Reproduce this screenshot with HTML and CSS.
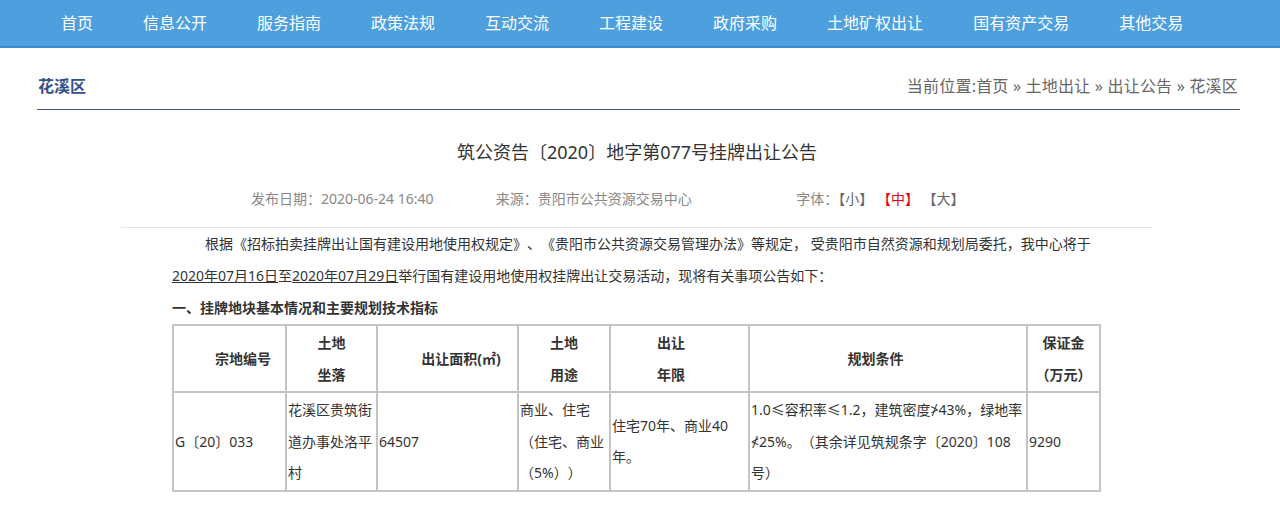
FILE: index.html
```html
<!DOCTYPE html>
<html lang="zh-CN">
<head>
    <meta charset="UTF-8">
    <title>筑公资告〔2020〕地字第077号挂牌出让公告</title>
    <link rel="stylesheet" href="styles.css">
</head>
<body>
    <div class="nav">
        <div class="wrap">
            <ul class="menu">
                <li><a href="#">首页</a></li>
                <li><a href="#">信息公开</a></li>
                <li><a href="#">服务指南</a></li>
                <li><a href="#">政策法规</a></li>
                <li><a href="#">互动交流</a></li>
                <li><a href="#">工程建设</a></li>
                <li><a href="#">政府采购</a></li>
                <li><a href="#">土地矿权出让</a></li>
                <li><a href="#">国有资产交易</a></li>
                <li><a href="#">其他交易</a></li>
            </ul>
        </div>
    </div>

    <div class="wrap crumbbar">
        <span class="area">花溪区</span>
        <span class="position">当前位置:<a href="#">首页</a> » <a href="#">土地出让</a> » <a href="#">出让公告</a> » <a href="#">花溪区</a></span>
    </div>

    <div class="wrap">
        <div class="article">
            <h1 class="title">筑公资告〔2020〕地字第077号挂牌出让公告</h1>
            <div class="meta">
                <span class="date">发布日期：2020-06-24 16:40</span>
                <span class="source">来源：贵阳市公共资源交易中心</span>
                <span class="fontsize">字体：<a href="#">【小】</a> <a href="#" class="on">【中】</a> <a href="#">【大】</a></span>
            </div>

            <div class="content">
                <p class="lead">根据《招标拍卖挂牌出让国有建设用地使用权规定》、《贵阳市公共资源交易管理办法》等规定， 受贵阳市自然资源和规划局委托，我中心将于<u>2020年07月16日</u>至<u>2020年07月29日</u>举行国有建设用地使用权挂牌出让交易活动，现将有关事项公告如下：</p>
                <p class="subhead">一、挂牌地块基本情况和主要规划技术指标</p>

                <table class="land">
                    <colgroup>
                        <col style="width:113px">
                        <col style="width:91px">
                        <col style="width:141px">
                        <col style="width:92px">
                        <col style="width:139px">
                        <col style="width:278px">
                        <col style="width:73px">
                    </colgroup>
                    <tr>
                        <th class="shift-r">宗地编号</th>
                        <th>土地<br>坐落</th>
                        <th class="shift-r">出让面积(㎡)</th>
                        <th>土地<br>用途</th>
                        <th class="shift-l">出让<br>年限</th>
                        <th class="shift-l2">规划条件</th>
                        <th>保证金<br>（万元）</th>
                    </tr>
                    <tr>
                        <td>G〔20〕033</td>
                        <td>花溪区贵筑街道办事处洛平村</td>
                        <td>64507</td>
                        <td>商业、住宅（住宅、商业（5%））</td>
                        <td>住宅70年、商业40年。</td>
                        <td>1.0≤容积率≤1.2，建筑密度≯43%，绿地率≮25%。（其余详见筑规条字〔2020〕108号）</td>
                        <td>9290</td>
                    </tr>
                </table>
            </div>
        </div>
    </div>
</body>
</html>
```

FILE: styles.css
```css
body {
    margin: 0;
    padding: 0;
    font-family: "Noto Sans", "Noto Sans CJK SC", "Microsoft YaHei", sans-serif;
    font-size: 14px;
    color: #333;
    background: #fff;
    text-spacing-trim: space-all;
}

a {
    color: inherit;
    text-decoration: none;
}

.wrap {
    width: 1200px;
    margin: 0 43px 0 37px;
}

/* top menu */
.nav {
    height: 46px;
    background: #4d9fdd;
    border-bottom: 2px solid #3b89c9;
}

.menu {
    display: flex;
    gap: 50px;
    margin: 0;
    padding: 0 0 0 24px;
    list-style: none;
}

.menu a {
    display: block;
    font-size: 16px;
    line-height: 46px;
    color: #fff;
}

/* location bar */
.crumbbar {
    display: flex;
    justify-content: space-between;
    padding: 26px 2px 11px 1px;
    line-height: 24px;
    border-bottom: 1px solid #4b5a8a;
}

.crumbbar .area {
    font-size: 16px;
    font-weight: bold;
    color: #34508a;
}

.crumbbar .position {
    font-size: 16px;
    letter-spacing: 0.2px;
    color: #666;
}

/* article */
.article {
    width: 1032px;
    margin: 0 auto;
}

.title {
    margin: 27px 0 0;
    font-size: 18px;
    font-weight: normal;
    line-height: 30px;
    text-align: center;
    color: #333;
}

.meta {
    margin-top: 18px;
    padding: 0 0 14px 130px;
    line-height: 28px;
    color: #888;
    border-bottom: 1px solid #e5e5e5;
    text-spacing-trim: normal;
}

.meta .date {
    display: inline-block;
    width: 241px;
}

.meta .source {
    display: inline-block;
    width: 297px;
}

.meta .fontsize a {
    color: #666;
}

.meta .fontsize a.on {
    color: #e60012;
}

.content {
    padding: 0 51px;
}

.content p {
    margin: 0;
    line-height: 32px;
}

.lead {
    text-indent: 33px;
}

.subhead {
    font-weight: bold;
}

/* land table */
.land {
    width: 929px;
    table-layout: fixed;
    border-collapse: collapse;
}

.land th,
.land td {
    padding: 1px;
    border: 2px solid #c4c4c4;
    line-height: 31.5px;
    vertical-align: middle;
}

.land th {
    text-align: center;
    font-weight: bold;
}

.land td {
    text-align: left;
}

.land th.shift-r {
    padding-left: 28px;
}

.land th.shift-l {
    padding-right: 18px;
}

.land th.shift-l2 {
    padding-right: 26px;
}
```
